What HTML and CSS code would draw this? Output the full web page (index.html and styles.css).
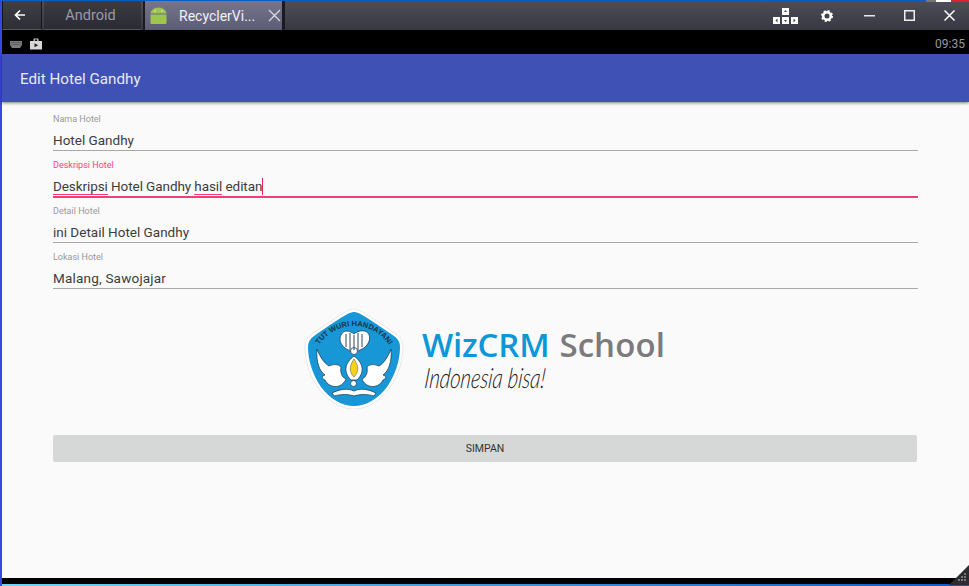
FILE: index.html
```html
<!DOCTYPE html>
<html lang="id">
<head>
<meta charset="utf-8">
<title>Edit Hotel Gandhy</title>
<link rel="stylesheet" href="styles.css">
</head>
<body>
<div class="window">
  <div class="edge"></div>
  <header class="titlebar">
    <div class="tabs">
      <div class="tab back">
        <svg width="12" height="12" viewBox="0 0 12 12"><path d="M11 6H2M6 1.5 1.5 6 6 10.5" fill="none" stroke="#fff" stroke-width="1.7"/></svg>
      </div>
      <div class="tab android">Android</div>
      <div class="tab active">
        <svg class="droid" width="17" height="17" viewBox="0 0 17 17"><path d="M3.500 0l1.500 2.500M13.500 0 12 2.500" stroke="#7e9a4a" stroke-width=".7"/><path d="M.5 6.500a8 6 0 0 1 16 0zM.5 7.500h16v8.500a1 1 0 0 1-1 1h-14a1 1 0 0 1-1-1z" fill="#9dc64e"/><circle cx="5" cy="4" r=".8" fill="#eef"/><circle cx="12" cy="4" r=".8" fill="#eef"/></svg>
        <span class="tab-name">RecyclerVi...</span>
        <svg width="13" height="13" viewBox="0 0 13 13"><path d="M1 1l11 11M12 1 1 12" stroke="#d9d9e4" stroke-width="1.3"/></svg>
      </div>
    </div>
    <div class="controls">
      <svg class="keys" width="25" height="16" viewBox="0 0 25 16"><g fill="#fff"><rect x="9" y="0" width="7" height="7"/><rect x="0" y="9" width="7" height="7"/><rect x="9" y="9" width="7" height="7"/><rect x="18" y="9" width="7" height="7"/></g><g fill="#444"><path d="M11 4l1.500-2L14 4zM11 12l1.500 2 1.500-2zM4.500 10.500l-2 2 2 2zM20.500 10.500l2 2-2 2z"/></g></svg>
      <svg class="gear" width="12" height="12" viewBox="0 0 12 12"><circle cx="6" cy="6" r="3.800" fill="none" stroke="#fff" stroke-width="2.600"/><circle cx="6" cy="6" r="5" fill="none" stroke="#fff" stroke-width="2" stroke-dasharray="2 1.930"/></svg>
      <svg width="11" height="2" viewBox="0 0 11 2"><rect width="11" height="1.500" fill="#e8e8e8"/></svg>
      <svg width="11" height="11" viewBox="0 0 11 11"><rect x=".75" y=".75" width="9.500" height="9.500" fill="none" stroke="#eee" stroke-width="1.500"/></svg>
      <svg width="11" height="11" viewBox="0 0 11 11"><path d="M.5.5l10 10M10.500.5l-10 10" stroke="#fff" stroke-width="1.500"/></svg>
    </div>
  </header>
  <div class="statusbar">
    <div class="status-icons">
      <svg width="12" height="7" viewBox="0 0 12 7"><path d="M0 0h12v4l-2 3H2L0 4z" fill="#7d7d7d"/><path d="M1.500 1.500h9M1.500 3.500h9" stroke="#333" stroke-width=".8" stroke-dasharray="1 1"/></svg>
      <svg width="12" height="12" viewBox="0 0 12 12"><path d="M0 3h3.500V1.500a1 1 0 0 1 1-1h3a1 1 0 0 1 1 1V3H12v8.500H0z" fill="#d8d8d8"/><path d="M4.800 1.400h2.400V3H4.800z" fill="#111"/><path d="M4.500 5.300 8.200 7.300 4.500 9.300z" fill="#222"/></svg>
    </div>
    <span class="clock">09:35</span>
  </div>
  <div class="appbar">Edit Hotel Gandhy</div>
  <main class="content">
    <form class="form">
      <label class="field">
        <span class="field-label">Nama Hotel</span>
        <span class="field-value">Hotel Gandhy</span>
      </label>
      <label class="field focused">
        <span class="field-label">Deskripsi Hotel</span>
        <span class="field-value tight"><span class="spell">Deskripsi</span> Hotel Gandhy <span class="spell">hasil</span> editan<span class="caret"></span></span>
      </label>
      <label class="field">
        <span class="field-label">Detail Hotel</span>
        <span class="field-value">ini Detail Hotel Gandhy</span>
      </label>
      <label class="field">
        <span class="field-label">Lokasi Hotel</span>
        <span class="field-value loose">Malang, Sawojajar</span>
      </label>
    </form>
    <div class="logo">
      <svg class="emblem" width="100" height="100" viewBox="0 0 100 100">
        <path d="M50 0C54 0 60 3 92 25Q99 30 99 37C99 52 94 68 85 80C76 92 63 100 50 100C37 100 24 92 15 80C6 68 1 52 1 37Q1 30 8 25C40 3 46 0 50 0Z" fill="#fff" stroke="#dedede" stroke-width=".7"/>
        <path d="M50 3C54 3 60 6 90 27Q96 31 96 38C96 52 91 66 83 78C74 90 62 97 50 97C38 97 26 90 17 78C9 66 4 52 4 38Q4 31 10 27C40 6 46 3 50 3Z" fill="#1897d6"/>
        <path id="arc" d="M8.300 58.700A41.700 41.700 0 0 1 91.700 58.700" fill="none"/>
        <text class="emblem-text"><textPath href="#arc" startOffset="50%" text-anchor="middle">TUT WURI HANDAYANI</textPath></text>
        <g fill="#fff" stroke="#14324a" stroke-width=".7">
          <path d="M13 40C12 52 15 62 21 66C17 67 18 70 21 71C23 75 28 79 35 77C38 76 41 73 42 70C38 68 36 64 37 58C34 55 30 55 25 57C20 54 16 48 13 40Z"/>
          <path d="M87 40C88 52 85 62 79 66C83 67 82 70 79 71C77 75 72 79 65 77C62 76 59 73 58 70C62 68 64 64 63 58C66 55 70 55 75 57C80 54 84 48 87 40Z"/>
          <path d="M37 26C40 20 46 22 50 25C54 22 60 20 64 24C67 28 66 34 60 39L54 42H46L41 39C36 35 35 30 37 26Z"/>
          <path d="M28 84C36 80 44 79 50 82C56 79 64 80 72 84L70 87C63 85 56 85 50 87C44 85 37 85 30 87Z"/>
          <circle cx="49.500" cy="74.500" r="3"/>
          <circle cx="50" cy="42" r="3.500"/>
        </g>
        <path d="M42 25v13M46 24v17M50 26v15M54 24v17M58 25v13" stroke="#14324a" stroke-width=".9" fill="none"/>
        <path d="M50 47C42 53 38 62 47 71H53C62 62 58 53 50 47Z" fill="#fff" stroke="#14324a" stroke-width=".7"/>
        <path d="M50 50C46 56 44 62 50 68C56 62 54 56 50 50Z" fill="#f6d21a" stroke="#14324a" stroke-width=".4"/>
      </svg>
      <div class="brand">
        <div class="brand-name"><span class="brand-wiz">WizCRM</span><span class="brand-school">School</span></div>
        <div class="brand-tag">Indonesia bisa!</div>
      </div>
    </div>
    <div class="action">
      <button class="save" type="button">SIMPAN</button>
    </div>
  </main>
  <div class="bottom"></div>
  <svg class="grip" width="20" height="20" viewBox="0 0 20 20"><path d="M20 0V20H0Z" fill="#2b2b30"/><g fill="#77777d"><rect x="15" y="8" width="2" height="2"/><rect x="12" y="11" width="2" height="2"/><rect x="15" y="11" width="2" height="2"/><rect x="9" y="14" width="2" height="2"/><rect x="12" y="14" width="2" height="2"/><rect x="15" y="14" width="2" height="2"/></g></svg>
</div>
</body>
</html>
```
FILE: styles.css
```css
* { box-sizing: border-box; }
html, body { margin: 0; height: 100%; }
body { font-family: Roboto, "Liberation Sans", sans-serif; overflow: hidden; background: #000; }
.window { width: 969px; height: 586px; display: flex; flex-direction: column; border-top: 1px solid #0b5cc4; border-left: 2px solid #3b45e0; background: #000; position: relative; }
.edge { position: absolute; top: -1px; left: 924px; width: 43px; height: 2px; background: linear-gradient(90deg, #777 0 24%, #fff 24% 58%, #d8242c 58%); }
.titlebar { height: 29px; display: flex; justify-content: space-between; background: linear-gradient(#4e4e5a, #383842); flex: none; }
.tabs { display: flex; }
.tab { height: 29px; display: flex; align-items: center; flex: none; }
.back { width: 40px; margin-right: 2px; justify-content: center; background: linear-gradient(#3f3f48, #2e2e36); border-right: 1px solid #16161a; border-left: 1px solid #16161a; border-bottom: 1px solid #55555f; padding-right: 4px; }
.android { width: 97px; justify-content: center; color: #9a9aa4; font-size: 14.500px; margin-right: 2px; background: linear-gradient(#3b3b44, #2b2b33); border-bottom: 1px solid #55555f; padding-right: 4px; }
.active { width: 142px; padding-left: 5px; color: #f0f0fa; font-size: 14px; background: linear-gradient(#75758e, #5c5c74); border-left: 2px solid #1a1a20; border-right: 3px solid #1a1a20; }
.tab-name { margin-left: 12px; margin-right: 6px; width: 83px; white-space: nowrap; }
.controls { display: flex; align-items: center; justify-content: flex-end; gap: 29px; padding-right: 14px; }
.keys { margin-right: -6px; }
.gear { margin-right: 2px; }
.statusbar { height: 24px; background: #000; display: flex; justify-content: space-between; align-items: center; flex: none; padding: 4px 4px 0 8px; }
.status-icons { display: flex; align-items: center; gap: 8px; }
.clock { color: #999; font-size: 12px; }
.appbar { height: 48px; flex: none; background: #3f51b5; color: #e8eaf6; font-size: 15.200px; line-height: 50px; padding-left: 18px; box-shadow: 0 1px 3px rgba(0,0,0,.5); position: relative; z-index: 1; }
.content { flex: 1; background: #fafafa; padding: 8px 51px 0; display: flex; flex-direction: column; }
.form { display: flex; flex-direction: column; }
.field { height: 41px; margin-bottom: 5px; display: flex; flex-direction: column; border-bottom: 1px solid #a8a8a8; }
.field-label { font-size: 9px; line-height: 12px; margin-top: 3px; color: #999; }
.field-value { font-size: 13.500px; line-height: 16px; color: #3c3c3c; margin-top: 7px; white-space: nowrap; }
.tight { letter-spacing: -.08px; }
.loose { letter-spacing: .2px; }
.focused { border-bottom: 2px solid #f0407a; height: 42px; margin-bottom: 4px; }
.focused .field-label { color: #ff4081; }
.spell { border-bottom: 1px solid #f0406a; }
.caret { display: inline-block; width: 1px; height: 17px; background: #e91e63; vertical-align: -4px; }
.logo { display: flex; align-items: flex-start; margin-top: 15px; padding-left: 251px; height: 100px; }
.emblem { flex: none; }
.emblem-text { font-family: "Liberation Sans", sans-serif; font-size: 7.500px; font-weight: 700; fill: #14324a; }
.brand { margin-left: 18px; margin-top: 14px; }
.brand-name { font-family: "Open Sans", sans-serif; font-size: 33px; font-weight: 600; line-height: 44px; white-space: nowrap; letter-spacing: -.2px; }
.brand-wiz { color: #0f96d8; }
.brand-school { color: #7b7b7b; margin-left: 10px; letter-spacing: .1px; }
.brand-tag { font-family: Lato, sans-serif; font-style: italic; font-weight: 300; font-size: 28px; line-height: 28px; color: #222; margin-top: -4px; margin-left: 3px; transform: skewX(-6deg) scaleX(.72); transform-origin: left center; white-space: nowrap; }
.action { margin-top: 26px; }
.save { display: block; width: 864px; height: 27px; border: 0; border-radius: 2px; background: #d6d7d7; color: #333; font-family: Roboto, sans-serif; font-size: 10.500px; padding: 0; }
.grip { position: absolute; right: 0; bottom: 1px; }
.bottom { flex: none; height: 8px; background: linear-gradient(#000 6px, transparent 6px), linear-gradient(90deg, #6fd6f5, #0b5cc4); }
```
